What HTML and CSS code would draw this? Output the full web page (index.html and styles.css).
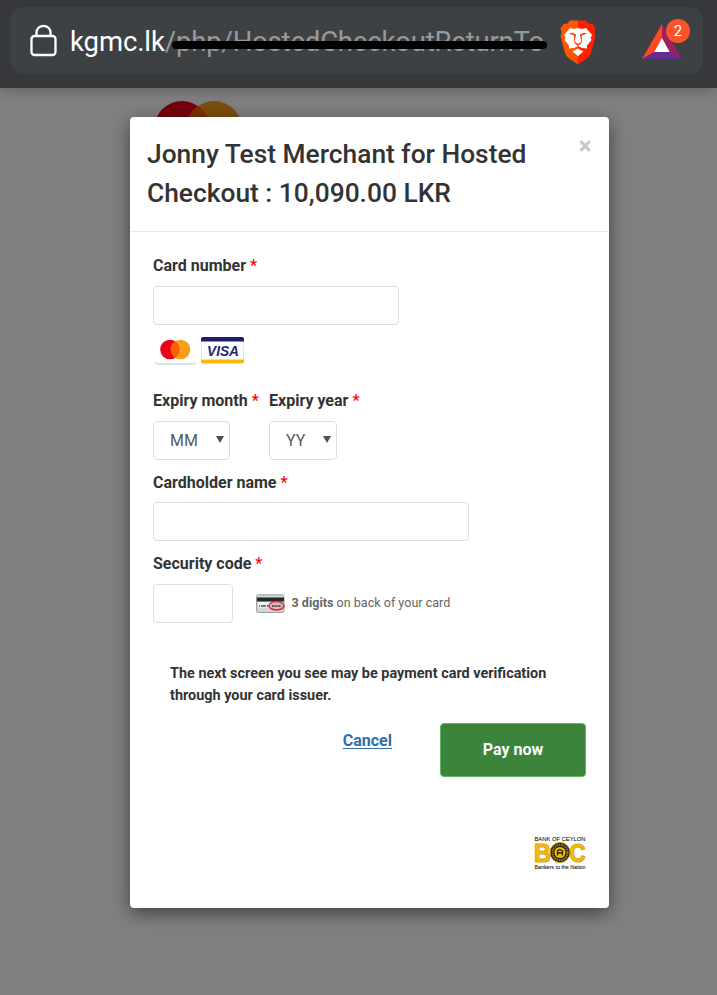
FILE: index.html
```html
<!DOCTYPE html>
<html lang="en">
<head>
<meta charset="utf-8">
<title>Hosted Checkout</title>
<link rel="stylesheet" href="styles.css">
</head>
<body>
<header class="browser">
  <div class="urlbar">
    <svg class="lock" width="28" height="33" viewBox="0 0 28 33" fill="none" stroke="#fff" stroke-width="2.3">
      <rect x="2.500" y="12" width="24" height="19" rx="3"/>
      <path d="M7.500 12V8.500a7 6.700 0 0 1 14 0V12"/>
    </svg>
    <div class="url"><span class="host">kgmc.lk</span><span class="path">/php/HostedCheckoutReturnTo</span><span class="redact"></span></div>
    <svg class="brave" width="38" height="45" viewBox="0 0 38 45">
      <path fill="#ff5500" d="M19 .500H11L8.500 3.500 4.500 4 1.500 8.500 2.500 12 1.500 16 6 33Q7 36 9.500 38L19 44.500z"/>
      <path fill="#ff2000" d="M19 .500H27L29.500 3.500 33.500 4 36.500 8.500 35.500 12 36.500 16 32 33Q31 36 28.500 38L19 44.500z"/>
      <path fill="#fff" d="M11 8 15 9 19 8 23 9 27 8 33 15 31.500 18 32.500 20 28 25.500 28 28.500 23 28 19 26 15 28 10 28.500 10 25.500 5.500 20 6.500 18 5 15zM19 28.500 24.500 31.500 19 36 13.500 31.500z"/>
      <path fill="#ff3800" d="M10 13.500 13 12.700 17 14.500 16.500 17.500 15.500 21.500 19 24 22.500 21.500 21.500 17.500 21 14.500 25 12.700 28 13.500 22.800 15.500 23 21.500 22 23.500 19 26 16 23.500 15 21.500 15.200 15.500z"/>
    </svg>
    <div class="rewards">
      <svg width="40" height="36" viewBox="0 0 40 36">
        <path fill="#ff4724" d="M20 0V14L12.500 28 0 35z"/>
        <path fill="#9e1f63" d="M20 0 39.500 35 27.500 28 20 14z"/>
        <path fill="#662d91" d="M0 35 12 28H28L39.500 35z"/>
        <path fill="#fff" d="M20 14 27.700 28H12.300z"/>
      </svg>
      <span class="badge">2</span>
    </div>
  </div>
</header>
<main class="page">
  <svg class="backlogo" width="88" height="56" viewBox="0 0 88 56">
    <circle cx="28" cy="28" r="28" fill="#76000d"/>
    <circle cx="60" cy="28" r="28" fill="#7b4f0e"/>
    <path d="M44 5a28 28 0 0 1 0 46a28 28 0 0 1 0-46" fill="#803000"/>
  </svg>
  <section class="modal">
    <div class="modal-head">
      <h1>Jonny Test Merchant for Hosted<br>Checkout : 10,090.00 LKR</h1>
      <span class="close">×</span>
    </div>
    <form class="form">
      <label>Card number <i>*</i></label>
      <div class="field card"></div>
      <div class="brands">
        <svg width="43" height="31" viewBox="0 0 43 31">
          <rect x="1" y="2" width="41" height="28" rx="3" fill="#dce2e5"/>
          <rect x="1" y="0" width="41" height="28" rx="3" fill="#fff"/>
          <circle cx="16" cy="14.500" r="9.800" fill="#eb001b"/>
          <circle cx="26.500" cy="14.500" r="9.800" fill="#f79e1b"/>
          <path d="M21.250 6.200a9.800 9.800 0 0 1 0 16.600a9.800 9.800 0 0 1 0-16.600" fill="#ff5f00"/>
        </svg>
        <svg width="43" height="31" viewBox="0 0 43 31">
          <rect x=".5" y="2.500" width="42" height="25" rx="2" fill="#fff" stroke="#e6e6e6"/>
          <path d="M0 6.500V4Q0 2 2 2H41Q43 2 43 4V6.500z" fill="#1d1e70"/>
          <path d="M0 24.500H43V26.500Q43 28.500 41 28.500H2Q0 28.500 0 26.500z" fill="#f9b90a"/>
          <text class="visa" x="6" y="20.800" textLength="32" lengthAdjust="spacingAndGlyphs">VISA</text>
        </svg>
      </div>
      <div class="expiry">
        <div class="group">
          <label>Expiry month <i>*</i></label>
          <div class="field select month"><span>MM</span><b class="arrow"></b></div>
        </div>
        <div class="group">
          <label>Expiry year <i>*</i></label>
          <div class="field select year"><span>YY</span><b class="arrow"></b></div>
        </div>
      </div>
      <label>Cardholder name <i>*</i></label>
      <div class="field name"></div>
      <label>Security code <i>*</i></label>
      <div class="security">
        <div class="field code"></div>
        <svg width="29" height="20" viewBox="0 0 29 20">
          <rect x=".5" y=".8" width="27.500" height="17.700" rx="1.800" fill="#d4d6d5" stroke="#9b9e9d"/>
          <rect x="1" y="3.500" width="27" height="4" fill="#1b2b29"/>
          <rect x="2" y="8" width="15" height="5.500" fill="#f1f1f1"/>
          <path d="M3 12h1M5 12h5M11 12h4" stroke="#777" stroke-width="1.800"/>
          <ellipse cx="20.500" cy="11.800" rx="7.500" ry="4.200" fill="#d5b8b8" stroke="#ed2b2b" stroke-width="1.500"/>
          <path d="M16 12h9" stroke="#6c5a5c" stroke-width="2" stroke-dasharray="2.500 .6"/>
        </svg>
        <span class="hint"><b>3 digits</b> on back of your card</span>
      </div>
      <p class="notice">The next screen you see may be payment card verification<br>through your card issuer.</p>
      <div class="actions">
        <a class="cancel">Cancel</a>
        <div class="pay">Pay now</div>
      </div>
      <svg class="bank" width="52" height="38" viewBox="0 0 52 38">
        <text class="bank-small" x=".5" y="5.500" textLength="51" lengthAdjust="spacingAndGlyphs">BANK OF CEYLON</text>
        <text class="bank-big" x="0" y="27" textLength="17" lengthAdjust="spacingAndGlyphs">B</text>
        <text class="bank-big" x="35.500" y="27" textLength="16" lengthAdjust="spacingAndGlyphs">C</text>
        <circle cx="26" cy="17.500" r="10" fill="#28240f" stroke="#c29613" stroke-width="1"/>
        <circle cx="26" cy="17.500" r="7.600" fill="none" stroke="#a9850f" stroke-width="1.800" stroke-dasharray="1.500 .8"/>
        <circle cx="26" cy="17.500" r="5.500" fill="#f0bb12"/>
        <path d="M23.500 20.500V16l2-1.500 3 1.500v4.500M23.500 18h5" fill="none" stroke="#28240f" stroke-width="1.300"/>
        <text class="bank-small" x=".5" y="33.500" textLength="51" lengthAdjust="spacingAndGlyphs">Bankers to the Nation</text>
      </svg>
    </form>
  </section>
</main>
</body>
</html>
```
FILE: styles.css
```css
* { box-sizing: border-box; }
body {
  margin: 0;
  height: 995px;
  overflow: hidden;
  background: #808080;
  color: #333;
  font: 16px/24px Roboto, sans-serif;
}
svg { display: block; flex: none; overflow: visible; }
.browser {
  position: relative;
  z-index: 2;
  height: 88px;
  padding: 7px 14px 0 10px;
  background: #37383c;
  box-shadow: 0 1px 14px rgba(0, 0, 0, .28);
}
.urlbar {
  display: flex;
  height: 67px;
  padding-left: 19px;
  border-radius: 14px;
  background: #3d4144;
}
.lock { margin-top: 17px; }
.url {
  position: relative;
  width: 477px;
  margin-left: 13px;
  font-size: 27.5px;
  line-height: 70px;
  white-space: nowrap;
}
.host { color: #fff; letter-spacing: -.1px; }
.path { color: #97999b; letter-spacing: -.18px; }
.redact {
  position: absolute;
  left: 102px;
  top: 33.5px;
  width: 375px;
  height: 8px;
  border-radius: 4px;
  background: #000;
}
.brave { margin: 12.5px 0 0 12px; }
.rewards { position: relative; margin: 17px 0 0 45px; height: 36px; }
.badge {
  position: absolute;
  left: 24px;
  top: -5px;
  width: 24px;
  height: 24px;
  border-radius: 50%;
  background: #fb542b;
  color: #fff;
  font-size: 15px;
  line-height: 24px;
  text-align: center;
}
.page { position: relative; padding: 29px 108px 0 129.5px; }
.backlogo { position: absolute; left: 153.5px; top: 12.5px; }
.modal {
  position: relative;
  height: 791px;
  border-radius: 4px;
  background: #fff;
  box-shadow: 0 5px 18px rgba(0, 0, 0, .5);
}
.modal-head {
  display: flex;
  justify-content: space-between;
  height: 115px;
  padding: 17px 17.5px 0 17.5px;
  border-bottom: 1px solid #e9e9e9;
}
h1 { margin: 1px 0 0; font-size: 26.35px; line-height: 39px; font-weight: 500; white-space: nowrap; }
.close { color: #c5c5c5; font-size: 24px; font-weight: 700; line-height: 24px; }
.form { padding: 22px 23.5px 0; }
label { display: block; font-weight: 700; white-space: nowrap; }
label i { color: #f00; font-style: normal; font-weight: 500; }
.field {
  height: 39px;
  border: 1px solid #dcdee3;
  border-radius: 4px;
}
.card { width: 246px; margin-top: 8px; }
.brands { display: flex; gap: 4px; margin: 10px 0 23px 1px; }
.expiry { display: flex; gap: 10px; margin-bottom: 11px; }
.group { width: 106px; }
.select {
  display: flex;
  justify-content: space-between;
  align-items: center;
  margin-top: 8px;
  padding: 0 5px 0 16px;
  color: #55595f;
}
.month { width: 77px; }
.year { width: 68px; }
.arrow {
  margin-top: -2px;
  border: 4px solid transparent;
  border-top: 7px solid #495057;
  border-bottom: 0;
}
.name { width: 316px; margin: 7px 0 11px; }
.security { display: flex; align-items: center; margin-top: 8px; }
.code { width: 80px; margin-right: 23px; }
.hint { margin: -2px 0 0 6.5px; font-size: 12.57px; color: #666; }
.notice {
  margin: 40px 0 0 17px;
  font-size: 14.43px;
  line-height: 22px;
  font-weight: 700;
}
.actions { display: flex; justify-content: flex-end; gap: 47.5px; margin-top: 15.5px; }
.cancel {
  margin-top: 6px;
  color: #2f6fab;
  font-weight: 700;
  text-decoration: underline;
  text-underline-offset: 2px;
}
.pay {
  width: 146px;
  height: 54px;
  padding-left: 1px;
  border: 1px solid #5cb85c;
  border-radius: 4px;
  background: #3c843b;
  color: #fff;
  font-weight: 700;
  line-height: 52px;
  text-align: center;
}
.bank { margin: 58px 0 0 auto; }
.visa { font: italic 700 15px "Liberation Sans", sans-serif; fill: #24256f; }
.bank-small { font: 5.800px "Liberation Sans", sans-serif; fill: #222; stroke: #222; stroke-width: .1px; }
.bank-big { font: 700 26px "Liberation Sans", sans-serif; fill: #f5bd12; stroke: #dba60f; stroke-width: 1.2px; }
```
